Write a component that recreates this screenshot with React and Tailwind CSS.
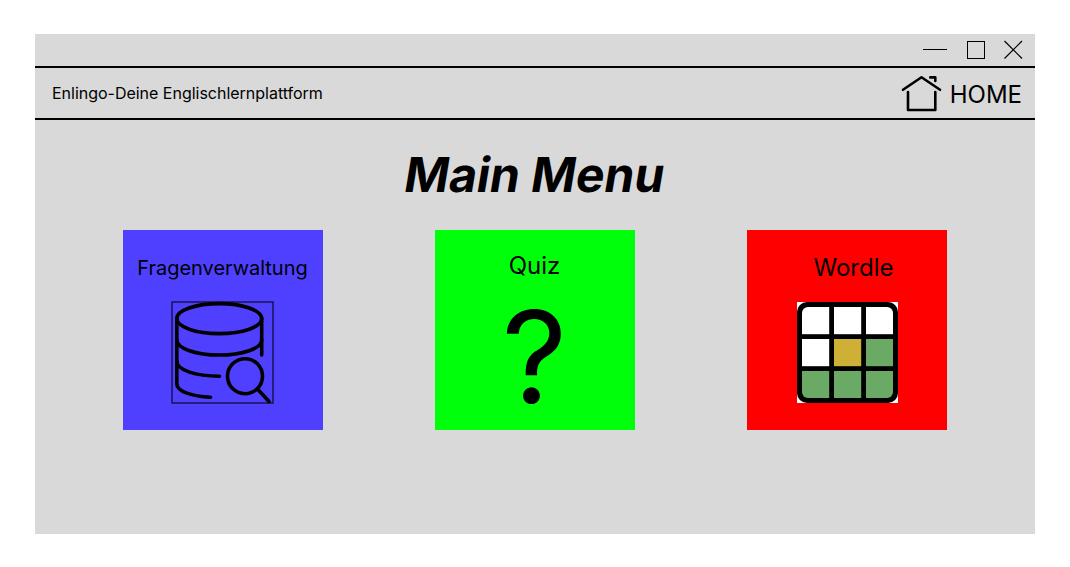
function WindowControls() {
  return (
    <svg className="h-8 w-28" viewBox="918 34 112 32" fill="none" stroke="#000" strokeWidth="1">
      <path d="M923 49.5H947" />
      <rect x="967.5" y="41.5" width="17" height="17" />
      <path d="M1004.5 41L1022 58.5M1022 41L1004.5 58.5" strokeWidth="1.2" />
    </svg>
  );
}

function HomeIcon() {
  return (
    <svg className="h-10 w-11" viewBox="900 73 44 40" fill="none" stroke="#000" strokeWidth="2.6" strokeLinecap="round" strokeLinejoin="round">
      <path d="M903 89.8L921.5 77.2L940 89.8" />
      <path d="M908 92V110H935.3V92" />
      <path d="M930.3 77.4H935.3V81" />
    </svg>
  );
}

function DatabaseSearchIcon() {
  return (
    <svg className="size-[104px]" viewBox="171 301 104 104" fill="none" stroke="#000" strokeWidth="3.6" strokeLinecap="round">
      <rect x="172" y="302" width="101" height="101" strokeWidth="1.3" strokeOpacity="0.8" />
      <ellipse cx="219.2" cy="318.6" rx="42.5" ry="15" />
      <path d="M176.8 318.6V384C177 391.5 192 396.5 210.5 397.2" />
      <path d="M261.7 318.6V355" />
      <path d="M176.8 340C177 348.5 196 355 219.2 355S261.5 348.5 261.7 340" />
      <path d="M176.8 361C177 370.5 196 376.2 219.5 376.2" />
      <circle cx="245" cy="376.2" r="17.5" />
      <path d="M257.5 389L269 401.5" />
    </svg>
  );
}

function WordleIcon() {
  const white = "#ffffff";
  const yellow = "#cfb036";
  const green = "#6aaa64";
  const cells = [white, white, white, white, yellow, green, green, green, green];
  return (
    <svg className="size-[101px]" viewBox="0 0 101 101">
      <rect width="101" height="101" fill="#fff" />
      <rect width="101" height="101" rx="10" fill="#000" />
      <clipPath id="board">
        <rect x="5" y="5" width="91" height="91" rx="6" />
      </clipPath>
      <g clipPath="url(#board)">
        {cells.map((fill, i) => (
          <rect key={i} x={5 + (i % 3) * 32} y={5 + Math.floor(i / 3) * 32} width="27.2" height="27.2" fill={fill} />
        ))}
      </g>
    </svg>
  );
}

export default function App() {
  return (
    <div className="h-[567px] bg-white px-[35px] pt-[34px] font-['Inter',sans-serif] text-black">
      <div className="flex h-[500px] flex-col bg-[#d9d9d9]">
        <div className="flex h-8 justify-end pr-[5px]">
          <WindowControls />
        </div>
        <header className="flex h-[54px] items-center justify-between border-y-2 border-black pl-[17px] pr-[13px]">
          <span className="text-base tracking-[-0.015px]">Enlingo-Deine Englischlernplattform</span>
          <button className="flex items-center gap-1.5">
            <HomeIcon />
            <span className="pt-1 text-2xl leading-7">HOME</span>
          </button>
        </header>
        <h1 className="mt-[26px] -skew-x-[9.4deg] text-center text-5xl font-bold leading-[58px]">Main Menu</h1>
        <main className="mt-[26px] flex justify-between px-[88px]">
          <button className="flex size-[200px] flex-col items-center bg-[#4f3fff] pt-[26px]">
            <span className="pr-px text-xl leading-6 tracking-[-0.03px]">Fragenverwaltung</span>
            <span className="mt-[21px]">
              <DatabaseSearchIcon />
            </span>
          </button>
          <button className="flex size-[200px] flex-col items-center bg-[#00ff0a] pt-[21px]">
            <span className="pr-px text-2xl leading-[29px]">Quiz</span>
            <span className="mt-8 pr-px text-[128px] leading-[90px]">?</span>
          </button>
          <button className="flex size-[200px] flex-col items-center bg-[#ff0000] pt-[23px]">
            <span className="pl-[13px] text-2xl leading-[29px]">Wordle</span>
            <span className="mt-5 pl-px">
              <WordleIcon />
            </span>
          </button>
        </main>
      </div>
    </div>
  );
}
